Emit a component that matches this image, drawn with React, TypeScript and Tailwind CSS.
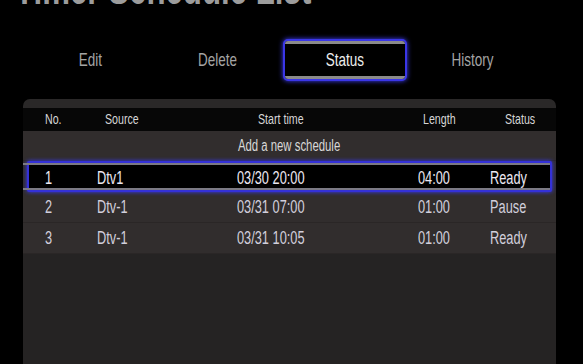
import type { ReactNode } from "react";

const tabs = ["Edit", "Delete", "Status", "History"];

const rows = [
  { no: "1", source: "Dtv1", start: "03/30 20:00", length: "04:00", status: "Ready" },
  { no: "2", source: "Dtv-1", start: "03/31 07:00", length: "01:00", status: "Pause" },
  { no: "3", source: "Dtv-1", start: "03/31 10:05", length: "01:00", status: "Ready" },
];

const cols = "grid grid-cols-[22px_52px_140px_181px_72px_1fr]";

// the set-top box font is very condensed; squeeze Liberation Sans to match
function N({ children, center }: { children: ReactNode; center?: boolean }) {
  return (
    <span className={`inline-block whitespace-nowrap scale-x-[0.71] ${center ? "origin-center" : "origin-left"}`}>
      {children}
    </span>
  );
}

export default function App() {
  return (
    <div className="w-[583px] h-[364px] overflow-hidden bg-black font-['Liberation_Sans',Arial,sans-serif]">
      {/* cut-off page title */}
      <div className="h-[7px] overflow-hidden pl-[15px]">
        <div className="-mt-[33px] text-[44px] leading-none font-bold text-[#9c9c9c]">
          <N>Timer Schedule List</N>
        </div>
      </div>

      {/* tabs */}
      <div className="mt-[32px] px-[27px] grid grid-cols-4 w-[563px]">
        {tabs.map((t) =>
          t === "Status" ? (
            <div key={t} className="flex justify-center">
              <div className="w-[124px] h-[42px] rounded-[5px] border-2 border-[#3a36e8] shadow-[0_0_5px_#4040ff] bg-black flex items-center justify-center">
                <div className="w-full h-full border-y-[3px] border-[#8a8a8a] rounded-[3px] flex items-center justify-center text-[19px] text-[#eeeeee]">
                  <N center>{t}</N>
                </div>
              </div>
            </div>
          ) : (
            <div key={t} className="h-[42px] flex items-center justify-center text-[19px] text-[#a4a4a4]">
              <N center>{t}</N>
            </div>
          )
        )}
      </div>

      {/* schedule panel */}
      <div className="mt-[18px] ml-[23px] w-[533px] h-[300px] rounded-t-[7px] bg-[#2a2828] pt-[9px]">
        <div className={`${cols} h-[23px] items-center bg-[#070707] text-[15px] text-[#d6d6d6]`}>
          <span />
          <span><N>No.</N></span>
          <span className="pl-[8px]"><N>Source</N></span>
          <span className="pl-[21px]"><N>Start time</N></span>
          <span className="pl-[5px]"><N>Length</N></span>
          <span className="pl-[15px]"><N>Status</N></span>
        </div>
        <div className="bg-[#312d2d]">
          <div className="h-[30px] flex items-center justify-center text-[16px] text-[#d8d8d8] border-b border-[#2a2626]">
            <N center>Add a new schedule</N>
          </div>
          {rows.map((r, i) =>
            i === 0 ? (
              <div key={r.no} className="px-[4px]">
                <div className="h-[31px] rounded-[2px] border-2 border-[#3431d8] shadow-[0_0_4px_#3a3aff] bg-black">
                  <div className={`${cols} -ml-[6px] h-full items-center border-y-2 border-[#7c7a84] text-[18px] text-[#ece8f2]`}>
                    <span />
                    <span><N>{r.no}</N></span>
                    <span><N>{r.source}</N></span>
                    <span><N>{r.start}</N></span>
                    <span><N>{r.length}</N></span>
                    <span><N>{r.status}</N></span>
                  </div>
                </div>
              </div>
            ) : (
              <div key={r.no} className={`${cols} h-[31px] items-center text-[18px] text-[#d2cfdc] border-b border-[#2a2626]`}>
                <span />
                <span><N>{r.no}</N></span>
                <span><N>{r.source}</N></span>
                <span><N>{r.start}</N></span>
                <span><N>{r.length}</N></span>
                <span><N>{r.status}</N></span>
              </div>
            )
          )}
        </div>
        <div className="h-full bg-[#252323]" />
      </div>
    </div>
  );
}
